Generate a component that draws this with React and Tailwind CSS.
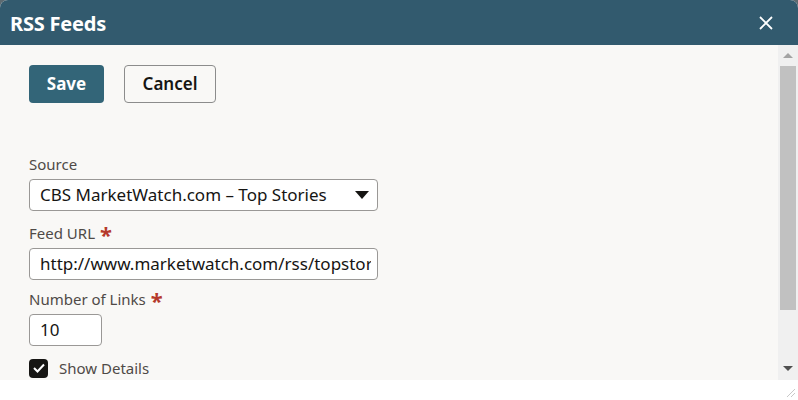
import React from 'react';

const font = { fontFamily: '"Noto Sans", "Open Sans", Arial, sans-serif' };

const Required = () => <span className="ml-[5px] text-[22px] font-bold leading-[20px] h-[20px] text-[#b5392b] relative top-[1px]">*</span>;

const RssFeedsDialog = () => {
  return (
    <div className="w-[798px] h-[400px] bg-[#5d6a70] overflow-hidden" style={font}>
      <div className="w-full h-[400px] bg-white rounded-t-[8px] flex flex-col overflow-hidden">
        {/* header */}
        <div className="h-[45px] shrink-0 bg-[#325a6e] flex items-center justify-between pl-[10px] pr-[25px]">
          <h1 className="text-white text-[20px] font-bold tracking-[-0.2px] relative top-[1px]">RSS Feeds</h1>
          <svg width="14" height="14" viewBox="0 0 14 14" className="text-white">
            <path d="M1 1L13 13M13 1L1 13" stroke="currentColor" strokeWidth="1.8" />
          </svg>
        </div>

        {/* body + scrollbar */}
        <div className="h-[335px] shrink-0 flex bg-[#f9f8f6]">
          <div className="flex-1 pl-[29px] pt-[20px] overflow-hidden">
            <div className="flex gap-[20px]">
              <button className="h-[38px] w-[75px] rounded-[4px] bg-[#336578] text-white text-[17px] font-bold">Save</button>
              <button className="h-[38px] w-[92px] rounded-[4px] border border-[#8c8c8c] text-[#161513] text-[17px] font-semibold">Cancel</button>
            </div>

            <div className="mt-[51px] text-[15px] text-[#4f4a47] leading-[20px]">Source</div>
            <div className="mt-[5px] w-[349px] h-[32px] bg-white border border-[#9a9896] rounded-[4px] flex items-center justify-between pl-[10px] pr-[8px]">
              <span className="text-[17px] text-[#161513]">CBS MarketWatch.com – Top Stories</span>
              <svg width="14" height="8" viewBox="0 0 14 8"><path d="M0 0H14L7 8Z" fill="#161513" /></svg>
            </div>

            <div className="mt-[12px] h-[20px] text-[15px] text-[#4f4a47] leading-[20px] flex items-start">Feed URL<Required /></div>
            <div className="mt-[5px] w-[349px] h-[32px] bg-white border border-[#9a9896] rounded-[4px] flex items-center pl-[10px] pr-[6px]">
              <div className="overflow-hidden">
                <span className="text-[17px] text-[#161513] whitespace-nowrap">http://www.marketwatch.com/rss/topstories</span>
              </div>
            </div>

            <div className="mt-[9px] h-[20px] text-[15px] text-[#4f4a47] leading-[20px] flex items-start">Number of Links<Required /></div>
            <div className="mt-[5px] w-[73px] h-[32px] bg-white border border-[#9a9896] rounded-[4px] flex items-center pl-[10px]">
              <span className="text-[17px] text-[#161513]">10</span>
            </div>

            <div className="mt-[11px] flex items-center gap-[11px]">
              <div className="w-[19px] h-[19px] rounded-[4px] bg-[#161513] flex items-center justify-center">
                <svg width="12" height="10" viewBox="0 0 12 10"><path d="M1 5L4.5 8.5L11 1.5" stroke="white" strokeWidth="2" fill="none" /></svg>
              </div>
              <span className="text-[15px] text-[#4f4a47]">Show Details</span>
            </div>
          </div>

          {/* scrollbar */}
          <div className="w-[20px] h-full bg-[#f0f0f0] flex flex-col items-center">
            <div className="h-[21px] flex items-center justify-center">
              <svg width="10" height="5" viewBox="0 0 10 5"><path d="M0 5H10L5 0Z" fill="#a3a3a3" /></svg>
            </div>
            <div className="w-[16px] h-[244px] bg-[#c1c1c1]" />
            <div className="flex-1" />
            <div className="h-[24px] flex items-center justify-center">
              <svg width="10" height="5" viewBox="0 0 10 5"><path d="M0 0H10L5 5Z" fill="#505050" /></svg>
            </div>
          </div>
        </div>

        {/* footer strip */}
        <div className="flex-1 bg-white flex justify-end items-end">
          <svg width="12" height="12" viewBox="0 0 12 12" className="mb-[2px] mr-[2px]">
            <path d="M11 3L3 11M11 7L7 11" stroke="#c8c8c8" strokeWidth="1" />
          </svg>
        </div>
      </div>
    </div>
  );
};

export default RssFeedsDialog;
